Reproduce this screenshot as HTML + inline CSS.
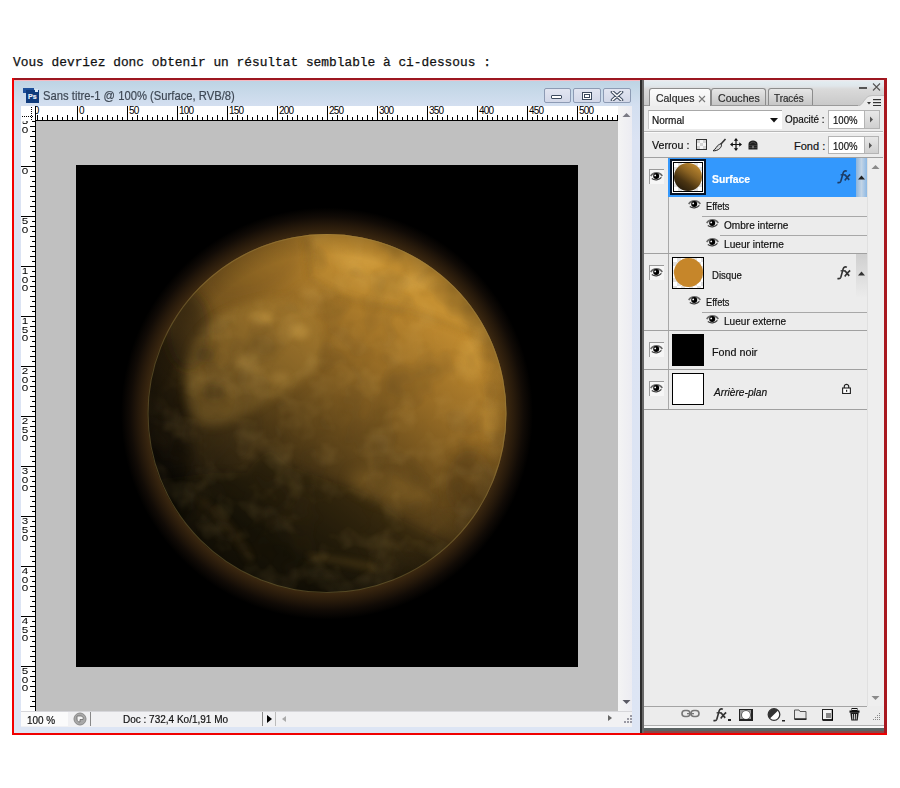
<!DOCTYPE html>
<html><head><meta charset="utf-8">
<style>
html,body{margin:0;padding:0;background:#fff;}
body{width:900px;height:788px;overflow:hidden;position:relative;font-family:"Liberation Sans",sans-serif;}
.a{position:absolute;}
.t{position:absolute;white-space:nowrap;line-height:1;-webkit-text-stroke:0.2px currentColor;}
#intro{position:absolute;left:13px;top:56px;font-family:"Liberation Mono",monospace;font-size:12.85px;line-height:13px;color:#111;white-space:pre;-webkit-text-stroke:0.25px #111;}
.hl{position:absolute;top:106px;font-size:10px;line-height:10px;letter-spacing:-0.75px;color:#000;}
.vl{position:absolute;left:21px;width:8px;font-size:9px;line-height:10px;color:#000;text-align:center;transform:scale(1.3,1.05);transform-origin:4px 0;}
.vl span{display:block;height:6.85px;text-align:center;}
</style></head><body>
<div id="intro">Vous devriez donc obtenir un résultat semblable à ci-dessous :</div>

<!-- red frame -->
<div class="a" style="left:12px;top:78px;width:875px;height:2px;background:#9c1620"></div>
<div class="a" style="left:12px;top:78px;width:2px;height:657px;background:#f40000"></div>
<div class="a" style="left:884px;top:78px;width:3px;height:657px;background:#a8181f"></div>
<div class="a" style="left:12px;top:733px;width:875px;height:2px;background:#f00000"></div>

<!-- document window -->
<div class="a" style="left:14px;top:80px;width:626px;height:653px;background:linear-gradient(#bcd3e4 0px,#c8d9e9 12px,#d3dff0 25px,#dbe3f3 60px,#dde5f4 100%)"></div>
<div class="a" style="left:14px;top:80px;width:626px;height:1px;background:#f8b8c0"></div>
<!-- PS icon -->
<div class="a" style="left:23px;top:88px;width:16px;height:15px;">
 <div class="a" style="left:0;top:0;width:11px;height:5px;background:#1c4f9a"></div>
 <div class="a" style="left:3px;top:2px;width:13px;height:13px;background:#0f3b7c"></div>
 <div class="a" style="left:12px;top:1px;width:3px;height:3px;background:#d8e8f8"></div>
 <div class="t" style="left:5px;top:5px;font-size:7px;color:#e8eef8;font-weight:bold;">Ps</div>
</div>
<div class="t" style="left:43px;top:89px;font-size:13px;color:#3e4854;transform:scaleX(0.865);transform-origin:0 0">Sans titre-1 @ 100% (Surface, RVB/8)</div>
<!-- title buttons -->
<div class="a" style="left:544px;top:88px;width:25px;height:13px;border:1px solid #8d9bb4;border-radius:2px;background:linear-gradient(#e2e5f1,#d3d8e8)">
  <div class="a" style="left:6px;top:6px;width:9px;height:2px;border:1px solid #3d4a5e;background:#fff;border-radius:1px"></div>
</div>
<div class="a" style="left:573px;top:88px;width:26px;height:13px;border:1px solid #8d9bb4;border-radius:2px;background:linear-gradient(#e2e5f1,#d3d8e8)">
  <div class="a" style="left:8px;top:3px;width:8px;height:6px;border:1px solid #3d4a5e;background:#fff;"><div class="a" style="left:1px;top:1px;width:4px;height:2px;border:1px solid #3d4a5e"></div></div>
</div>
<div class="a" style="left:603px;top:88px;width:26px;height:13px;border:1px solid #8d9bb4;border-radius:2px;background:linear-gradient(#e2e5f1,#d3d8e8)">
  <svg class="a" style="left:6px;top:2px" width="14" height="10" viewBox="0 0 14 10"><path d="M2.5 1 L11.5 9 M11.5 1 L2.5 9" stroke="#3d4a5e" stroke-width="3.6" stroke-linecap="round"/><path d="M2.5 1 L11.5 9 M11.5 1 L2.5 9" stroke="#fff" stroke-width="1.6" stroke-linecap="round"/></svg>
</div>

<!-- rulers -->
<div class="a" style="left:21px;top:106px;width:597px;height:15px;background:#fff"></div>
<div class="a" style="left:21px;top:121px;width:15px;height:591px;background:#fff"></div>
<svg class="a" style="left:0;top:0" width="900" height="788">
<g fill="#000">
<rect x="36" y="120" width="582" height="1"/>
<rect x="35" y="106" width="1" height="605"/>
<rect x="37" y="115" width="1" height="5"/><rect x="42" y="117" width="1" height="3"/><rect x="47" y="115" width="1" height="5"/><rect x="52" y="117" width="1" height="3"/><rect x="57" y="115" width="1" height="5"/><rect x="62" y="117" width="1" height="3"/><rect x="67" y="115" width="1" height="5"/><rect x="72" y="117" width="1" height="3"/><rect x="77" y="106" width="1" height="14"/><rect x="82" y="117" width="1" height="3"/><rect x="87" y="115" width="1" height="5"/><rect x="92" y="117" width="1" height="3"/><rect x="97" y="115" width="1" height="5"/><rect x="102" y="117" width="1" height="3"/><rect x="107" y="115" width="1" height="5"/><rect x="112" y="117" width="1" height="3"/><rect x="117" y="115" width="1" height="5"/><rect x="122" y="117" width="1" height="3"/><rect x="127" y="106" width="1" height="14"/><rect x="132" y="117" width="1" height="3"/><rect x="137" y="115" width="1" height="5"/><rect x="142" y="117" width="1" height="3"/><rect x="147" y="115" width="1" height="5"/><rect x="152" y="117" width="1" height="3"/><rect x="157" y="115" width="1" height="5"/><rect x="162" y="117" width="1" height="3"/><rect x="167" y="115" width="1" height="5"/><rect x="172" y="117" width="1" height="3"/><rect x="177" y="106" width="1" height="14"/><rect x="182" y="117" width="1" height="3"/><rect x="187" y="115" width="1" height="5"/><rect x="192" y="117" width="1" height="3"/><rect x="197" y="115" width="1" height="5"/><rect x="202" y="117" width="1" height="3"/><rect x="207" y="115" width="1" height="5"/><rect x="212" y="117" width="1" height="3"/><rect x="217" y="115" width="1" height="5"/><rect x="222" y="117" width="1" height="3"/><rect x="227" y="106" width="1" height="14"/><rect x="232" y="117" width="1" height="3"/><rect x="237" y="115" width="1" height="5"/><rect x="242" y="117" width="1" height="3"/><rect x="247" y="115" width="1" height="5"/><rect x="252" y="117" width="1" height="3"/><rect x="257" y="115" width="1" height="5"/><rect x="262" y="117" width="1" height="3"/><rect x="267" y="115" width="1" height="5"/><rect x="272" y="117" width="1" height="3"/><rect x="277" y="106" width="1" height="14"/><rect x="282" y="117" width="1" height="3"/><rect x="287" y="115" width="1" height="5"/><rect x="292" y="117" width="1" height="3"/><rect x="297" y="115" width="1" height="5"/><rect x="302" y="117" width="1" height="3"/><rect x="307" y="115" width="1" height="5"/><rect x="312" y="117" width="1" height="3"/><rect x="317" y="115" width="1" height="5"/><rect x="322" y="117" width="1" height="3"/><rect x="327" y="106" width="1" height="14"/><rect x="332" y="117" width="1" height="3"/><rect x="337" y="115" width="1" height="5"/><rect x="342" y="117" width="1" height="3"/><rect x="347" y="115" width="1" height="5"/><rect x="352" y="117" width="1" height="3"/><rect x="357" y="115" width="1" height="5"/><rect x="362" y="117" width="1" height="3"/><rect x="367" y="115" width="1" height="5"/><rect x="372" y="117" width="1" height="3"/><rect x="377" y="106" width="1" height="14"/><rect x="382" y="117" width="1" height="3"/><rect x="387" y="115" width="1" height="5"/><rect x="392" y="117" width="1" height="3"/><rect x="397" y="115" width="1" height="5"/><rect x="402" y="117" width="1" height="3"/><rect x="407" y="115" width="1" height="5"/><rect x="412" y="117" width="1" height="3"/><rect x="417" y="115" width="1" height="5"/><rect x="422" y="117" width="1" height="3"/><rect x="427" y="106" width="1" height="14"/><rect x="432" y="117" width="1" height="3"/><rect x="437" y="115" width="1" height="5"/><rect x="442" y="117" width="1" height="3"/><rect x="447" y="115" width="1" height="5"/><rect x="452" y="117" width="1" height="3"/><rect x="457" y="115" width="1" height="5"/><rect x="462" y="117" width="1" height="3"/><rect x="467" y="115" width="1" height="5"/><rect x="472" y="117" width="1" height="3"/><rect x="477" y="106" width="1" height="14"/><rect x="482" y="117" width="1" height="3"/><rect x="487" y="115" width="1" height="5"/><rect x="492" y="117" width="1" height="3"/><rect x="497" y="115" width="1" height="5"/><rect x="502" y="117" width="1" height="3"/><rect x="507" y="115" width="1" height="5"/><rect x="512" y="117" width="1" height="3"/><rect x="517" y="115" width="1" height="5"/><rect x="522" y="117" width="1" height="3"/><rect x="527" y="106" width="1" height="14"/><rect x="532" y="117" width="1" height="3"/><rect x="537" y="115" width="1" height="5"/><rect x="542" y="117" width="1" height="3"/><rect x="547" y="115" width="1" height="5"/><rect x="552" y="117" width="1" height="3"/><rect x="557" y="115" width="1" height="5"/><rect x="562" y="117" width="1" height="3"/><rect x="567" y="115" width="1" height="5"/><rect x="572" y="117" width="1" height="3"/><rect x="577" y="106" width="1" height="14"/><rect x="582" y="117" width="1" height="3"/><rect x="587" y="115" width="1" height="5"/><rect x="592" y="117" width="1" height="3"/><rect x="597" y="115" width="1" height="5"/><rect x="602" y="117" width="1" height="3"/><rect x="607" y="115" width="1" height="5"/><rect x="612" y="117" width="1" height="3"/><rect x="617" y="115" width="1" height="5"/>
<rect x="32" y="121" width="3" height="1"/><rect x="30" y="126" width="5" height="1"/><rect x="32" y="131" width="3" height="1"/><rect x="30" y="136" width="5" height="1"/><rect x="32" y="141" width="3" height="1"/><rect x="30" y="146" width="5" height="1"/><rect x="32" y="151" width="3" height="1"/><rect x="30" y="156" width="5" height="1"/><rect x="32" y="161" width="3" height="1"/><rect x="21" y="166" width="14" height="1"/><rect x="32" y="171" width="3" height="1"/><rect x="30" y="176" width="5" height="1"/><rect x="32" y="181" width="3" height="1"/><rect x="30" y="186" width="5" height="1"/><rect x="32" y="191" width="3" height="1"/><rect x="30" y="196" width="5" height="1"/><rect x="32" y="201" width="3" height="1"/><rect x="30" y="206" width="5" height="1"/><rect x="32" y="211" width="3" height="1"/><rect x="21" y="216" width="14" height="1"/><rect x="32" y="221" width="3" height="1"/><rect x="30" y="226" width="5" height="1"/><rect x="32" y="231" width="3" height="1"/><rect x="30" y="236" width="5" height="1"/><rect x="32" y="241" width="3" height="1"/><rect x="30" y="246" width="5" height="1"/><rect x="32" y="251" width="3" height="1"/><rect x="30" y="256" width="5" height="1"/><rect x="32" y="261" width="3" height="1"/><rect x="21" y="266" width="14" height="1"/><rect x="32" y="271" width="3" height="1"/><rect x="30" y="276" width="5" height="1"/><rect x="32" y="281" width="3" height="1"/><rect x="30" y="286" width="5" height="1"/><rect x="32" y="291" width="3" height="1"/><rect x="30" y="296" width="5" height="1"/><rect x="32" y="301" width="3" height="1"/><rect x="30" y="306" width="5" height="1"/><rect x="32" y="311" width="3" height="1"/><rect x="21" y="316" width="14" height="1"/><rect x="32" y="321" width="3" height="1"/><rect x="30" y="326" width="5" height="1"/><rect x="32" y="331" width="3" height="1"/><rect x="30" y="336" width="5" height="1"/><rect x="32" y="341" width="3" height="1"/><rect x="30" y="346" width="5" height="1"/><rect x="32" y="351" width="3" height="1"/><rect x="30" y="356" width="5" height="1"/><rect x="32" y="361" width="3" height="1"/><rect x="21" y="366" width="14" height="1"/><rect x="32" y="371" width="3" height="1"/><rect x="30" y="376" width="5" height="1"/><rect x="32" y="381" width="3" height="1"/><rect x="30" y="386" width="5" height="1"/><rect x="32" y="391" width="3" height="1"/><rect x="30" y="396" width="5" height="1"/><rect x="32" y="401" width="3" height="1"/><rect x="30" y="406" width="5" height="1"/><rect x="32" y="411" width="3" height="1"/><rect x="21" y="416" width="14" height="1"/><rect x="32" y="421" width="3" height="1"/><rect x="30" y="426" width="5" height="1"/><rect x="32" y="431" width="3" height="1"/><rect x="30" y="436" width="5" height="1"/><rect x="32" y="441" width="3" height="1"/><rect x="30" y="446" width="5" height="1"/><rect x="32" y="451" width="3" height="1"/><rect x="30" y="456" width="5" height="1"/><rect x="32" y="461" width="3" height="1"/><rect x="21" y="466" width="14" height="1"/><rect x="32" y="471" width="3" height="1"/><rect x="30" y="476" width="5" height="1"/><rect x="32" y="481" width="3" height="1"/><rect x="30" y="486" width="5" height="1"/><rect x="32" y="491" width="3" height="1"/><rect x="30" y="496" width="5" height="1"/><rect x="32" y="501" width="3" height="1"/><rect x="30" y="506" width="5" height="1"/><rect x="32" y="511" width="3" height="1"/><rect x="21" y="516" width="14" height="1"/><rect x="32" y="521" width="3" height="1"/><rect x="30" y="526" width="5" height="1"/><rect x="32" y="531" width="3" height="1"/><rect x="30" y="536" width="5" height="1"/><rect x="32" y="541" width="3" height="1"/><rect x="30" y="546" width="5" height="1"/><rect x="32" y="551" width="3" height="1"/><rect x="30" y="556" width="5" height="1"/><rect x="32" y="561" width="3" height="1"/><rect x="21" y="566" width="14" height="1"/><rect x="32" y="571" width="3" height="1"/><rect x="30" y="576" width="5" height="1"/><rect x="32" y="581" width="3" height="1"/><rect x="30" y="586" width="5" height="1"/><rect x="32" y="591" width="3" height="1"/><rect x="30" y="596" width="5" height="1"/><rect x="32" y="601" width="3" height="1"/><rect x="30" y="606" width="5" height="1"/><rect x="32" y="611" width="3" height="1"/><rect x="21" y="616" width="14" height="1"/><rect x="32" y="621" width="3" height="1"/><rect x="30" y="626" width="5" height="1"/><rect x="32" y="631" width="3" height="1"/><rect x="30" y="636" width="5" height="1"/><rect x="32" y="641" width="3" height="1"/><rect x="30" y="646" width="5" height="1"/><rect x="32" y="651" width="3" height="1"/><rect x="30" y="656" width="5" height="1"/><rect x="32" y="661" width="3" height="1"/><rect x="21" y="666" width="14" height="1"/><rect x="32" y="671" width="3" height="1"/><rect x="30" y="676" width="5" height="1"/><rect x="32" y="681" width="3" height="1"/><rect x="30" y="686" width="5" height="1"/><rect x="32" y="691" width="3" height="1"/><rect x="30" y="696" width="5" height="1"/><rect x="32" y="701" width="3" height="1"/><rect x="30" y="706" width="5" height="1"/>
</g>
<g fill="#000"><rect x="22" y="116" width="1" height="1"/><rect x="24" y="116" width="1" height="1"/><rect x="26" y="116" width="1" height="1"/><rect x="28" y="116" width="1" height="1"/><rect x="30" y="116" width="1" height="1"/><rect x="32" y="116" width="1" height="1"/><rect x="31" y="107" width="1" height="1"/><rect x="31" y="109" width="1" height="1"/><rect x="31" y="111" width="1" height="1"/><rect x="31" y="113" width="1" height="1"/><rect x="31" y="115" width="1" height="1"/><rect x="31" y="117" width="1" height="1"/><rect x="31" y="119" width="1" height="1"/></g>
</svg>
<div class="a" style="left:36px;top:106px;width:582px;height:14px;overflow:hidden">
 <div class="a" style="left:-36px;top:-106px;width:900px;height:200px"><div class="hl" style="left:29px">50</div><div class="hl" style="left:79px">0</div><div class="hl" style="left:129px">50</div><div class="hl" style="left:179px">100</div><div class="hl" style="left:229px">150</div><div class="hl" style="left:279px">200</div><div class="hl" style="left:329px">250</div><div class="hl" style="left:379px">300</div><div class="hl" style="left:429px">350</div><div class="hl" style="left:479px">400</div><div class="hl" style="left:529px">450</div><div class="hl" style="left:579px">500</div><div class="hl" style="left:629px">550</div></div>
</div>
<div class="a" style="left:21px;top:121px;width:14px;height:590px;overflow:hidden">
 <div class="a" style="left:-21px;top:-121px;width:100px;height:900px"><div class="vl" style="top:116.3px">5</div><div class="vl" style="top:124.5px">0</div><div class="vl" style="top:166.3px">0</div><div class="vl" style="top:216.3px">5</div><div class="vl" style="top:224.5px">0</div><div class="vl" style="top:266.3px">1</div><div class="vl" style="top:274.5px">0</div><div class="vl" style="top:282.7px">0</div><div class="vl" style="top:316.3px">1</div><div class="vl" style="top:324.5px">5</div><div class="vl" style="top:332.7px">0</div><div class="vl" style="top:366.3px">2</div><div class="vl" style="top:374.5px">0</div><div class="vl" style="top:382.7px">0</div><div class="vl" style="top:416.3px">2</div><div class="vl" style="top:424.5px">5</div><div class="vl" style="top:432.7px">0</div><div class="vl" style="top:466.3px">3</div><div class="vl" style="top:474.5px">0</div><div class="vl" style="top:482.7px">0</div><div class="vl" style="top:516.3px">3</div><div class="vl" style="top:524.5px">5</div><div class="vl" style="top:532.7px">0</div><div class="vl" style="top:566.3px">4</div><div class="vl" style="top:574.5px">0</div><div class="vl" style="top:582.7px">0</div><div class="vl" style="top:616.3px">4</div><div class="vl" style="top:624.5px">5</div><div class="vl" style="top:632.7px">0</div><div class="vl" style="top:666.3px">5</div><div class="vl" style="top:674.5px">0</div><div class="vl" style="top:682.7px">0</div><div class="vl" style="top:716.3px">5</div><div class="vl" style="top:724.5px">5</div><div class="vl" style="top:732.7px">0</div></div>
</div>

<!-- canvas -->
<div class="a" style="left:36px;top:121px;width:582px;height:590px;background:#c0c0c0"></div>
<div class="a" style="left:76px;top:165px;width:502px;height:502px;background:#000"></div>
<svg id="planet" class="a" style="left:76px;top:165px" width="502" height="502" viewBox="76 165 502 502">
<defs>
 <radialGradient id="glow" cx="327" cy="413.5" r="206" gradientUnits="userSpaceOnUse">
  <stop offset="0.87" stop-color="#3c2810" stop-opacity="1"/>
  <stop offset="0.915" stop-color="#26190b" stop-opacity="1"/>
  <stop offset="0.955" stop-color="#110b06" stop-opacity="1"/>
  <stop offset="1" stop-color="#000" stop-opacity="1"/>
 </radialGradient>
 <linearGradient id="base" x1="245.8" y1="527.2" x2="411" y2="296" gradientUnits="userSpaceOnUse">
  <stop offset="0" stop-color="#1a150a"/>
  <stop offset="0.25" stop-color="#3e2e12"/>
  <stop offset="0.5" stop-color="#6c4e1c"/>
  <stop offset="0.75" stop-color="#9a6e26"/>
  <stop offset="1" stop-color="#c28c30"/>
 </linearGradient>
 <radialGradient id="shade" cx="327" cy="413.5" r="180" gradientUnits="userSpaceOnUse">
  <stop offset="0.88" stop-color="#000" stop-opacity="0"/>
  <stop offset="1" stop-color="#000" stop-opacity="0.2"/>
 </radialGradient>
 <clipPath id="disc"><circle cx="327" cy="413.5" r="179.5"/></clipPath>
 <filter id="b20" x="-50%" y="-50%" width="200%" height="200%"><feGaussianBlur stdDeviation="16"/></filter>
 <filter id="b8" x="-50%" y="-50%" width="200%" height="200%"><feGaussianBlur stdDeviation="7"/></filter>
 <filter id="b5" x="-50%" y="-50%" width="200%" height="200%"><feGaussianBlur stdDeviation="5"/></filter>
 <filter id="b3" x="-50%" y="-50%" width="200%" height="200%"><feGaussianBlur stdDeviation="3.5"/></filter>
 <filter id="texD" x="0" y="0" width="100%" height="100%">
  <feTurbulence type="fractalNoise" baseFrequency="0.022" numOctaves="3" seed="3" result="n"/>
  <feColorMatrix in="n" type="matrix" values="0 0 0 0 0.05  0 0 0 0 0.03  0 0 0 0 0.01  2.2 0 0 0 -1.0" result="c"/>
  <feComposite in="c" in2="SourceGraphic" operator="in"/>
 </filter>
 <filter id="texB" x="0" y="0" width="100%" height="100%">
  <feTurbulence type="fractalNoise" baseFrequency="0.03" numOctaves="3" seed="11" result="n"/>
  <feColorMatrix in="n" type="matrix" values="0 0 0 0 0.80  0 0 0 0 0.55  0 0 0 0 0.17  2.4 0 0 0 -1.15" result="c"/>
  <feComposite in="c" in2="SourceGraphic" operator="in"/>
 </filter>
 <mask id="nohaze" maskUnits="userSpaceOnUse" x="76" y="165" width="502" height="502">
  <rect x="76" y="165" width="502" height="502" fill="#fff"/>
  <path d="M306 226 L311 279 Q292 296 284 298 C240 300 205 320 192 345 Q170 380 150 420 L130 226 Z" fill="#000" filter="url(#b5)"/>
 </mask>
</defs>
<rect x="76" y="165" width="502" height="502" fill="#000"/>
<circle cx="327" cy="413.5" r="206" fill="url(#glow)"/>
<g clip-path="url(#disc)">
 <rect x="140" y="225" width="380" height="380" fill="url(#base)"/>
 <ellipse cx="160" cy="440" rx="30" ry="110" fill="#000" opacity="0.45" filter="url(#b8)"/>
 <ellipse cx="255" cy="268" rx="55" ry="28" transform="rotate(-25 255 268)" fill="#5a4018" opacity="0.2" filter="url(#b8)"/>
 <ellipse cx="188" cy="330" rx="22" ry="40" fill="#1a1208" opacity="0.45" filter="url(#b8)"/>
 <path d="M306 230 L311 279 Q338 300 381 306 Q433 315 472 335 Q500 355 515 380 L515 230 Z" fill="#cc9a3a" opacity="0.28" filter="url(#b3)"/>
 <path d="M306 236 L311 279 Q338 300 381 306 Q433 315 472 335" fill="none" stroke="#5a3e14" stroke-width="3" opacity="0.3" filter="url(#b3)"/>
 <path d="M192 345 C205 320 240 300 284 298 C310 300 325 320 323 350 C318 372 300 385 270 400 C250 412 225 432 200 425 C185 415 180 380 192 345 Z" fill="#b8903e" opacity="0.3" filter="url(#b5)"/>
 <ellipse cx="205" cy="355" rx="10" ry="8" fill="#1e1408" opacity="0.3" filter="url(#b5)"/>
 <ellipse cx="214" cy="392" rx="12" ry="9" fill="#1e1408" opacity="0.28" filter="url(#b5)"/>
 <ellipse cx="262" cy="318" rx="12" ry="6" fill="#d0a44c" opacity="0.45" filter="url(#b3)"/>
 <ellipse cx="300" cy="332" rx="9" ry="7" fill="#d0a44c" opacity="0.45" filter="url(#b3)"/>
 <ellipse cx="245" cy="362" rx="11" ry="7" fill="#c09848" opacity="0.35" filter="url(#b3)"/>
 <ellipse cx="280" cy="378" rx="10" ry="6" fill="#c09848" opacity="0.3" filter="url(#b3)"/>
 <ellipse cx="360" cy="262" rx="22" ry="9" fill="#dcaa4c" opacity="0.35" filter="url(#b3)"/>
 <ellipse cx="420" cy="282" rx="18" ry="8" fill="#dcaa4c" opacity="0.3" filter="url(#b3)"/>
 <ellipse cx="470" cy="360" rx="12" ry="22" fill="#d8a848" opacity="0.3" filter="url(#b3)"/>
 <ellipse cx="490" cy="420" rx="8" ry="20" fill="#d8a848" opacity="0.3" filter="url(#b3)"/>
 <path d="M150 480 L212 473 L246 473 Q262 452 271 450 Q280 458 288 465 L322 478 L351 488 L376 499 L402 520 L436 537 Q470 552 500 580 L500 640 L150 640 Z" fill="#0c0804" opacity="0.3" filter="url(#b5)"/>
 <ellipse cx="390" cy="488" rx="42" ry="15" transform="rotate(15 390 488)" fill="#a47c30" opacity="0.32" filter="url(#b8)"/>
 <ellipse cx="470" cy="485" rx="25" ry="35" fill="#2a1c08" opacity="0.3" filter="url(#b8)"/>
 <path d="M309 556 Q340 560 376 568" fill="none" stroke="#8a6a2c" stroke-width="5" opacity="0.35" filter="url(#b3)"/>
 <path d="M200 500 Q230 520 250 560" fill="none" stroke="#6a5024" stroke-width="5" opacity="0.3" filter="url(#b3)"/>
 <g mask="url(#nohaze)"><rect x="140" y="225" width="380" height="380" fill="#fff" filter="url(#texD)" opacity="0.26"/>
 <rect x="140" y="225" width="380" height="380" fill="#fff" filter="url(#texB)" opacity="0.15"/></g>
 <circle cx="327" cy="413.5" r="180" fill="url(#shade)"/>
</g>
<circle cx="327" cy="413.5" r="179" fill="none" stroke="#a08a48" stroke-width="1.1" opacity="0.4"/>
</svg>

<!-- v scrollbar -->
<div class="a" style="left:618px;top:106px;width:14px;height:605px;background:linear-gradient(90deg,#f4f4f4,#ececf2)"></div>
<svg class="a" style="left:622px;top:112px" width="9" height="6"><path d="M0.5 5 L4.5 1 L8.5 5Z" fill="#7a7a84"/></svg>
<svg class="a" style="left:622px;top:699px" width="9" height="6"><path d="M0.5 1 L4.5 5 L8.5 1Z" fill="#5a5a64"/></svg>

<!-- status bar -->
<div class="a" style="left:21px;top:711px;width:611px;height:15px;background:#f1f1f3;border-top:1px solid #d6d6da"></div>
<div class="a" style="left:21px;top:712px;width:47px;height:14px;background:#fbfbfb"></div>
<div class="t" style="left:26.5px;top:715px;font-size:11px;color:#111;transform:scaleX(0.904);transform-origin:0 0">100 %</div>
<svg class="a" style="left:73px;top:712px" width="14" height="14"><circle cx="7" cy="7" r="6" fill="#a8a8a8" stroke="#8a8a8a"/><path d="M4 4 L8 4 C10 4 10.5 6 10 7.5 L7 7.5 L7 10 C5 10 4 9 4 7Z" fill="#f4f4f4" stroke="#6a6a6a" stroke-width="0.8"/></svg>
<div class="a" style="left:90px;top:712px;width:1px;height:14px;background:#888"></div>
<div class="t" style="left:123px;top:714px;font-size:11px;color:#111;transform:scaleX(0.909);transform-origin:0 0">Doc : 732,4 Ko/1,91 Mo</div>
<div class="a" style="left:262px;top:712px;width:1px;height:14px;background:#888"></div>
<svg class="a" style="left:266px;top:714px" width="8" height="10"><path d="M1 1 L6 5 L1 9Z" fill="#000"/></svg>
<div class="a" style="left:275px;top:712px;width:1px;height:14px;background:#bbb"></div>
<svg class="a" style="left:281px;top:715px" width="6" height="8"><path d="M5 1 L1 4 L5 7Z" fill="#aaa"/></svg>
<svg class="a" style="left:607px;top:714px" width="6" height="8"><path d="M1 1 L5 4 L1 7Z" fill="#666"/></svg>


<svg class="a" style="left:624px;top:715px" width="9" height="10" fill="#9a9aa4"><rect x="6" y="0" width="2" height="2"/><rect x="3" y="3" width="2" height="2"/><rect x="6" y="3" width="2" height="2"/><rect x="0" y="6" width="2" height="2"/><rect x="3" y="6" width="2" height="2"/><rect x="6" y="6" width="2" height="2"/></svg>
<!-- layers panel -->
<div class="a" style="left:640px;top:80px;width:2px;height:653px;background:#2c2c2c"></div>
<div class="a" style="left:642px;top:80px;width:2px;height:653px;background:#686868"></div>
<div class="a" style="left:644px;top:80px;width:240px;height:653px;background:#ececec"></div>
<div class="a" style="left:644px;top:80px;width:240px;height:26px;background:linear-gradient(#f0e8ec 0px,#e2ecf0 2px,#e0e6ea 6px,#dadada 9px,#c9c9c9 25px)"></div>
<div class="a" style="left:644px;top:105px;width:240px;height:1px;background:#9a9a9a"></div>
<!-- tabs -->
<div class="a" style="left:711px;top:88px;width:55px;height:17px;box-sizing:border-box;border:1px solid #8c8c8c;border-bottom:none;border-radius:3px 3px 0 0;background:linear-gradient(#e6e6e6,#c6c6c6)"></div>
<div class="a" style="left:768px;top:88px;width:45px;height:17px;box-sizing:border-box;border:1px solid #8c8c8c;border-bottom:none;border-radius:3px 3px 0 0;background:linear-gradient(#e6e6e6,#c6c6c6)"></div>
<div class="a" style="left:649px;top:88px;width:62px;height:18px;box-sizing:border-box;border:1px solid #8c8c8c;border-bottom:none;border-radius:3px 3px 0 0;background:linear-gradient(#fbfbfb,#eeeeee)"></div>
<div class="t" style="left:656px;top:93px;font-size:11px;color:#2a2a2a;transform:scaleX(0.951);transform-origin:0 0">Calques</div>
<svg class="a" style="left:698px;top:95px" width="8" height="8"><path d="M1 1 L7 7 M7 1 L1 7" stroke="#777" stroke-width="1.1"/></svg>
<div class="t" style="left:718px;top:93px;font-size:11px;color:#2a2a2a;transform:scaleX(0.960);transform-origin:0 0">Couches</div>
<div class="t" style="left:774px;top:93px;font-size:11px;color:#2a2a2a;transform:scaleX(0.892);transform-origin:0 0">Tracés</div>
<!-- flyout corner -->
<svg class="a" style="left:858px;top:94px" width="26" height="12"><path d="M0 12 C6 12 6 2 14 2 L26 2 L26 12Z" fill="#ececec"/><path d="M0 11.5 C6 11.5 6 1.5 14 1.5 L26 1.5" fill="none" stroke="#c0c0c0"/><path d="M9 8 L13 8 L11 10.5Z" fill="#333"/><rect x="15" y="5" width="8" height="1.2" fill="#333"/><rect x="15" y="8" width="8" height="1.2" fill="#333"/><rect x="15" y="11" width="8" height="1" fill="#333"/></svg>
<div class="a" style="left:859px;top:87px;width:8px;height:2px;background:#555"></div>
<svg class="a" style="left:872px;top:83px" width="9" height="8"><path d="M1 0.5 L8 7.5 M8 0.5 L1 7.5" stroke="#555" stroke-width="1.1"/></svg>

<!-- blend row -->
<div class="a" style="left:648px;top:110px;width:134px;height:19px;box-sizing:border-box;background:#fff;border-top:1px solid #a8a8a8;border-left:1px solid #c8c8c8"></div>
<div class="t" style="left:652px;top:115px;font-size:11px;color:#111;transform:scaleX(0.909);transform-origin:0 0">Normal</div>
<svg class="a" style="left:770px;top:118px" width="8" height="5"><path d="M0 0 L8 0 L4 4.5Z" fill="#111"/></svg>
<div class="t" style="left:785px;top:114px;font-size:11px;color:#111;transform:scaleX(0.898);transform-origin:0 0">Opacité :</div>
<div class="a" style="left:828px;top:110px;width:37px;height:19px;box-sizing:border-box;background:#fff;border:1px solid #b4b4b4"></div>
<div class="t" style="left:833px;top:115px;font-size:11px;color:#111;transform:scaleX(0.872);transform-origin:0 0">100%</div>
<div class="a" style="left:865px;top:110px;width:15px;height:19px;box-sizing:border-box;background:linear-gradient(#e8e8e8,#d0d0d0);border:1px solid #b4b4b4;border-left:none"></div>
<svg class="a" style="left:869px;top:116px" width="5" height="7"><path d="M1 0.5 L4 3.5 L1 6.5Z" fill="#555"/></svg>
<div class="a" style="left:644px;top:131px;width:239px;height:1px;background:#b8b8b8"></div>
<div class="a" style="left:644px;top:132px;width:239px;height:1px;background:#fafafa"></div>

<!-- lock row -->
<div class="t" style="left:652px;top:140px;font-size:11px;color:#111;transform:scaleX(0.971);transform-origin:0 0">Verrou :</div>
<div class="a" style="left:696px;top:139px;width:11px;height:11px;box-sizing:border-box;border:1px solid #333;background:#f4f4f4"><div class="a" style="left:0;top:0;width:3px;height:3px;background:#d4d4d4"></div><div class="a" style="left:6px;top:0;width:3px;height:3px;background:#d4d4d4"></div><div class="a" style="left:3px;top:3px;width:3px;height:3px;background:#d4d4d4"></div><div class="a" style="left:0;top:6px;width:3px;height:3px;background:#d4d4d4"></div><div class="a" style="left:6px;top:6px;width:3px;height:3px;background:#d4d4d4"></div></div>
<svg class="a" style="left:712px;top:138px" width="15" height="14"><path d="M13.5 1 L8.5 6.5" stroke="#333" stroke-width="1.6"/><path d="M8.8 6 C7 6.2 5.5 7.5 4.2 9.5 C3.3 11 2.2 12 1 12.8 C3.5 13 6 12.2 7.8 10.5 C9.2 9 9.8 7.5 9.5 6.5 Z" fill="#d8d8d8" stroke="#222" stroke-width="1"/></svg>
<svg class="a" style="left:730px;top:138px" width="12" height="13"><path d="M6 1.5 L6 11.5 M1.5 6.5 L10.5 6.5" stroke="#111" stroke-width="1.2"/><path d="M6 0 L3.8 2.8 L8.2 2.8Z M6 13 L3.8 10.2 L8.2 10.2Z M0 6.5 L2.8 4.3 L2.8 8.7Z M12 6.5 L9.2 4.3 L9.2 8.7Z" fill="#111"/></svg>
<svg class="a" style="left:748px;top:139px" width="10" height="11"><path d="M0.5 10.5 L0.5 5 C0.5 0.2 9.5 0.2 9.5 5 L9.5 10.5 Z" fill="#222"/><path d="M2.6 5 C2.6 2.6 7.4 2.6 7.4 5" fill="none" stroke="#555" stroke-width="0.8"/><rect x="1" y="6" width="8" height="0.8" fill="#444"/><rect x="1" y="8" width="8" height="0.8" fill="#444"/><rect x="4.3" y="6.8" width="1.4" height="2.4" fill="#888"/></svg>
<div class="t" style="left:794px;top:141px;font-size:11px;color:#111;transform:scaleX(1.000);transform-origin:0 0">Fond :</div>
<div class="a" style="left:828px;top:136px;width:37px;height:18px;box-sizing:border-box;background:#fff;border:1px solid #b4b4b4"></div>
<div class="t" style="left:833px;top:141px;font-size:11px;color:#111;transform:scaleX(0.872);transform-origin:0 0">100%</div>
<div class="a" style="left:865px;top:136px;width:14px;height:18px;box-sizing:border-box;background:linear-gradient(#e8e8e8,#d0d0d0);border:1px solid #b4b4b4;border-left:none"></div>
<svg class="a" style="left:868px;top:142px" width="5" height="7"><path d="M1 0.5 L4 3.5 L1 6.5Z" fill="#555"/></svg>
<div class="a" style="left:644px;top:157px;width:239px;height:1px;background:#a0a0a0"></div>

<!-- layers list -->
<div class="a" style="left:867px;top:158px;width:16px;height:548px;background:#eeeeee;border-left:1px solid #e0e0e0"></div>
<svg class="a" style="left:871px;top:164px" width="9" height="6"><path d="M0.5 5 L4.5 1 L8.5 5Z" fill="#8a8a8a"/></svg>
<svg class="a" style="left:871px;top:695px" width="9" height="6"><path d="M0.5 1 L4.5 5 L8.5 1Z" fill="#8a8a8a"/></svg>
<div class="a" style="left:668px;top:158px;width:1px;height:251px;background:#a8a8a8"></div>

<!-- Surface row -->
<div class="a" style="left:668px;top:158px;width:199px;height:39px;background:#3398fd"></div>
<div class="a" style="left:856px;top:158px;width:11px;height:39px;background:linear-gradient(90deg,#8cb4dc,#c2d4e6 50%,#8cb8e4)"></div>
<svg class="a" style="left:858px;top:175px" width="7" height="5"><path d="M0 4.5 L3.5 0.5 L7 4.5Z" fill="#222"/></svg>
<div class="a" style="left:670px;top:159px;width:36px;height:36px;box-sizing:border-box;border:2px solid #061428;background:#fff">
 <div class="a" style="left:1px;top:1px;width:30px;height:30px;box-sizing:border-box;border:1px solid #000;background:repeating-conic-gradient(#e2e2e2 0 25%,#fff 0 50%) 0 0/8px 8px">
  <div class="a" style="left:0px;top:0px;width:28px;height:28px;border-radius:50%;background:linear-gradient(35deg,#1e160a 5%,#4a3412 35%,#8a6222 60%,#c08a30 90%)"></div>
 </div>
</div>
<div class="t" style="left:712px;top:174px;font-size:11px;font-weight:bold;color:#fff;transform:scaleX(0.943);transform-origin:0 0">Surface</div>
<svg class="a" style="left:836px;top:170px" width="16" height="14" viewBox="0 0 16 14"><path d="M10.8 1.3 C9.5 0.4 7.8 0.8 7.2 2.8 L4.8 11.2 C4.3 12.6 3.2 13 1.4 12.4" fill="none" stroke="#1d3c66" stroke-width="1.6"/><path d="M4.6 4.8 L9.2 4.8" stroke="#1d3c66" stroke-width="1.3"/><path d="M8.6 4.6 C10 5.5 11.5 8 13.2 9.8 M14.2 4.6 C12.5 5.5 11 7.5 8.8 10.4" fill="none" stroke="#1d3c66" stroke-width="1.7"/></svg>
<div class="a" style="left:649px;top:169px;width:15px;height:15px;box-sizing:border-box;border-left:1px solid #9a9a9a;border-top:1px solid #9a9a9a;background:#f6f6f6"></div>
<svg class="a" style="left:650px;top:171px" width="13" height="10" viewBox="0 0 13 10"><path d="M0.8 5.2 C3 0.8 10 0.8 12.2 5.2" fill="none" stroke="#6a6a6a" stroke-width="1.7"/><path d="M1.8 7.6 C4.5 9.6 9 9.4 11.4 6.4" fill="none" stroke="#3a3a3a" stroke-width="1.2"/><circle cx="6.2" cy="4.9" r="3" fill="#000"/><circle cx="5.2" cy="4.4" r="0.9" fill="#fff"/></svg>
<!-- effets surface -->
<svg class="a" style="left:688px;top:199px" width="13" height="10" viewBox="0 0 13 10"><path d="M0.8 5.2 C3 0.8 10 0.8 12.2 5.2" fill="none" stroke="#6a6a6a" stroke-width="1.7"/><path d="M1.8 7.6 C4.5 9.6 9 9.4 11.4 6.4" fill="none" stroke="#3a3a3a" stroke-width="1.2"/><circle cx="6.2" cy="4.9" r="3" fill="#000"/><circle cx="5.2" cy="4.4" r="0.9" fill="#fff"/></svg>
<div class="t" style="left:706px;top:201px;font-size:11px;color:#111;transform:scaleX(0.841);transform-origin:0 0">Effets</div>
<div class="a" style="left:702px;top:216px;width:165px;height:1px;background:#a8a8a8"></div>
<svg class="a" style="left:706px;top:218px" width="13" height="10" viewBox="0 0 13 10"><path d="M0.8 5.2 C3 0.8 10 0.8 12.2 5.2" fill="none" stroke="#6a6a6a" stroke-width="1.7"/><path d="M1.8 7.6 C4.5 9.6 9 9.4 11.4 6.4" fill="none" stroke="#3a3a3a" stroke-width="1.2"/><circle cx="6.2" cy="4.9" r="3" fill="#000"/><circle cx="5.2" cy="4.4" r="0.9" fill="#fff"/></svg>
<div class="t" style="left:724px;top:220px;font-size:11px;color:#111;transform:scaleX(0.915);transform-origin:0 0">Ombre interne</div>
<div class="a" style="left:720px;top:235px;width:147px;height:1px;background:#a8a8a8"></div>
<svg class="a" style="left:706px;top:237px" width="13" height="10" viewBox="0 0 13 10"><path d="M0.8 5.2 C3 0.8 10 0.8 12.2 5.2" fill="none" stroke="#6a6a6a" stroke-width="1.7"/><path d="M1.8 7.6 C4.5 9.6 9 9.4 11.4 6.4" fill="none" stroke="#3a3a3a" stroke-width="1.2"/><circle cx="6.2" cy="4.9" r="3" fill="#000"/><circle cx="5.2" cy="4.4" r="0.9" fill="#fff"/></svg>
<div class="t" style="left:723.5px;top:239px;font-size:11px;color:#111;transform:scaleX(0.924);transform-origin:0 0">Lueur interne</div>
<div class="a" style="left:644px;top:253px;width:223px;height:1px;background:#a0a0a0"></div>

<!-- Disque row -->
<div class="a" style="left:856px;top:254px;width:11px;height:44px;background:linear-gradient(#cfcfcf,#ececec)"></div>
<svg class="a" style="left:858px;top:271px" width="7" height="5"><path d="M0 4.5 L3.5 0.5 L7 4.5Z" fill="#333"/></svg>
<div class="a" style="left:672px;top:257px;width:32px;height:32px;box-sizing:border-box;border:1px solid #000;background:repeating-conic-gradient(#e2e2e2 0 25%,#fff 0 50%) 0 0/8px 8px">
  <div class="a" style="left:1px;top:0px;width:29px;height:29px;border-radius:50%;background:#c6862a"></div>
</div>
<div class="t" style="left:712px;top:270px;font-size:11px;color:#111;transform:scaleX(0.870);transform-origin:0 0">Disque</div>
<svg class="a" style="left:836px;top:266px" width="16" height="14" viewBox="0 0 16 14"><path d="M10.8 1.3 C9.5 0.4 7.8 0.8 7.2 2.8 L4.8 11.2 C4.3 12.6 3.2 13 1.4 12.4" fill="none" stroke="#333" stroke-width="1.6"/><path d="M4.6 4.8 L9.2 4.8" stroke="#333" stroke-width="1.3"/><path d="M8.6 4.6 C10 5.5 11.5 8 13.2 9.8 M14.2 4.6 C12.5 5.5 11 7.5 8.8 10.4" fill="none" stroke="#333" stroke-width="1.7"/></svg>
<div class="a" style="left:649px;top:265px;width:15px;height:15px;box-sizing:border-box;border-left:1px solid #9a9a9a;border-top:1px solid #9a9a9a;background:#f6f6f6"></div>
<svg class="a" style="left:650px;top:267px" width="13" height="10" viewBox="0 0 13 10"><path d="M0.8 5.2 C3 0.8 10 0.8 12.2 5.2" fill="none" stroke="#6a6a6a" stroke-width="1.7"/><path d="M1.8 7.6 C4.5 9.6 9 9.4 11.4 6.4" fill="none" stroke="#3a3a3a" stroke-width="1.2"/><circle cx="6.2" cy="4.9" r="3" fill="#000"/><circle cx="5.2" cy="4.4" r="0.9" fill="#fff"/></svg>
<svg class="a" style="left:688px;top:295px" width="13" height="10" viewBox="0 0 13 10"><path d="M0.8 5.2 C3 0.8 10 0.8 12.2 5.2" fill="none" stroke="#6a6a6a" stroke-width="1.7"/><path d="M1.8 7.6 C4.5 9.6 9 9.4 11.4 6.4" fill="none" stroke="#3a3a3a" stroke-width="1.2"/><circle cx="6.2" cy="4.9" r="3" fill="#000"/><circle cx="5.2" cy="4.4" r="0.9" fill="#fff"/></svg>
<div class="t" style="left:706px;top:297px;font-size:11px;color:#111;transform:scaleX(0.841);transform-origin:0 0">Effets</div>
<div class="a" style="left:702px;top:312px;width:165px;height:1px;background:#a8a8a8"></div>
<svg class="a" style="left:706px;top:314px" width="13" height="10" viewBox="0 0 13 10"><path d="M0.8 5.2 C3 0.8 10 0.8 12.2 5.2" fill="none" stroke="#6a6a6a" stroke-width="1.7"/><path d="M1.8 7.6 C4.5 9.6 9 9.4 11.4 6.4" fill="none" stroke="#3a3a3a" stroke-width="1.2"/><circle cx="6.2" cy="4.9" r="3" fill="#000"/><circle cx="5.2" cy="4.4" r="0.9" fill="#fff"/></svg>
<div class="t" style="left:723.5px;top:316px;font-size:11px;color:#111;transform:scaleX(0.916);transform-origin:0 0">Lueur externe</div>
<div class="a" style="left:644px;top:330px;width:223px;height:1px;background:#a0a0a0"></div>

<!-- Fond noir -->
<div class="a" style="left:672px;top:334px;width:32px;height:32px;background:#000"></div>
<div class="t" style="left:712px;top:347px;font-size:11px;color:#111;transform:scaleX(0.977);transform-origin:0 0">Fond noir</div>
<div class="a" style="left:649px;top:342px;width:15px;height:15px;box-sizing:border-box;border-left:1px solid #9a9a9a;border-top:1px solid #9a9a9a;background:#f6f6f6"></div>
<svg class="a" style="left:650px;top:344px" width="13" height="10" viewBox="0 0 13 10"><path d="M0.8 5.2 C3 0.8 10 0.8 12.2 5.2" fill="none" stroke="#6a6a6a" stroke-width="1.7"/><path d="M1.8 7.6 C4.5 9.6 9 9.4 11.4 6.4" fill="none" stroke="#3a3a3a" stroke-width="1.2"/><circle cx="6.2" cy="4.9" r="3" fill="#000"/><circle cx="5.2" cy="4.4" r="0.9" fill="#fff"/></svg>
<div class="a" style="left:644px;top:369px;width:223px;height:1px;background:#a0a0a0"></div>

<!-- Arriere-plan -->
<div class="a" style="left:672px;top:373px;width:32px;height:32px;box-sizing:border-box;border:1px solid #000;background:#fff"></div>
<div class="t" style="left:713.5px;top:387px;font-size:11px;font-style:italic;color:#111;transform:scaleX(0.925);transform-origin:0 0">Arrière-plan</div>
<div class="a" style="left:649px;top:381px;width:15px;height:15px;box-sizing:border-box;border-left:1px solid #9a9a9a;border-top:1px solid #9a9a9a;background:#f6f6f6"></div>
<svg class="a" style="left:650px;top:383px" width="13" height="10" viewBox="0 0 13 10"><path d="M0.8 5.2 C3 0.8 10 0.8 12.2 5.2" fill="none" stroke="#6a6a6a" stroke-width="1.7"/><path d="M1.8 7.6 C4.5 9.6 9 9.4 11.4 6.4" fill="none" stroke="#3a3a3a" stroke-width="1.2"/><circle cx="6.2" cy="4.9" r="3" fill="#000"/><circle cx="5.2" cy="4.4" r="0.9" fill="#fff"/></svg>
<svg class="a" style="left:842px;top:383px" width="9" height="11"><path d="M2.3 5 L2.3 3.3 C2.3 0.8 6.7 0.8 6.7 3.3 L6.7 5" fill="none" stroke="#222" stroke-width="1.2"/><rect x="0.6" y="5" width="7.8" height="5.5" fill="#fff" stroke="#222" stroke-width="1.1"/><rect x="4" y="6.8" width="1.2" height="2" fill="#222"/></svg>
<div class="a" style="left:644px;top:409px;width:223px;height:1px;background:#a0a0a0"></div>

<!-- bottom bar -->
<div class="a" style="left:644px;top:706px;width:223px;height:1px;background:#a4a4a4"></div>
<svg class="a" style="left:681px;top:709px" width="20" height="9"><rect x="1" y="1.5" width="8" height="6" rx="3" fill="none" stroke="#777" stroke-width="1.6"/><rect x="10" y="1.5" width="8" height="6" rx="3" fill="none" stroke="#777" stroke-width="1.6"/><rect x="6" y="4" width="7" height="1.3" fill="#777"/></svg>
<svg class="a" style="left:712px;top:708px" width="16" height="14" viewBox="0 0 16 14"><path d="M10.8 1.3 C9.5 0.4 7.8 0.8 7.2 2.8 L4.8 11.2 C4.3 12.6 3.2 13 1.4 12.4" fill="none" stroke="#333" stroke-width="1.6"/><path d="M4.6 4.8 L9.2 4.8" stroke="#333" stroke-width="1.3"/><path d="M8.6 4.6 C10 5.5 11.5 8 13.2 9.8 M14.2 4.6 C12.5 5.5 11 7.5 8.8 10.4" fill="none" stroke="#333" stroke-width="1.7"/></svg>
<div class="a" style="left:728px;top:719px;width:3px;height:2px;background:#222"></div>
<div class="a" style="left:739px;top:709px;width:14px;height:12px;box-sizing:border-box;border:1px solid #222;border-right-width:2px;border-bottom-width:2px;background:#9a9a9a"><div class="a" style="left:2px;top:1px;width:8px;height:8px;border-radius:50%;background:#fff;box-shadow:0 0 0 0.6px #333"></div></div>
<svg class="a" style="left:767px;top:708px" width="20" height="14"><circle cx="7" cy="6.5" r="5.8" fill="#fff" stroke="#333" stroke-width="1.3"/><path d="M11.1 2.4 A5.8 5.8 0 0 0 2.9 10.6Z" fill="#333"/><rect x="15" y="12" width="3" height="1.5" fill="#222"/></svg>
<svg class="a" style="left:794px;top:709px" width="13" height="11"><path d="M0.5 1 L5 1 L6 2.5 L12 2.5 L12 10 L0.5 10Z" fill="#e8e8e8" stroke="#555" stroke-width="1"/><path d="M0.5 10.2 L12.5 10.2" stroke="#222" stroke-width="1.5"/></svg>
<svg class="a" style="left:822px;top:709px" width="11" height="12"><rect x="0.5" y="0.5" width="10" height="10.5" fill="#f4f4f4" stroke="#222"/><rect x="4" y="4" width="5" height="5" fill="#888"/><path d="M1 11 L10.5 11 L10.5 1" stroke="#000" stroke-width="1.5" fill="none"/></svg>
<svg class="a" style="left:849px;top:708px" width="11" height="13"><rect x="3" y="0.5" width="5" height="2" fill="none" stroke="#111"/><rect x="0.5" y="2.5" width="10" height="2.2" fill="#111"/><path d="M1.3 4.5 L2.3 12.5 L8.7 12.5 L9.7 4.5Z" fill="#1a1a1a"/><path d="M3.5 6 L3.8 11.5 M5.5 6 L5.5 11.5 M7.5 6 L7.2 11.5" stroke="#e0e0e0" stroke-width="0.9"/></svg>
<svg class="a" style="left:872px;top:713px" width="9" height="9" fill="#888"><rect x="7" y="0" width="1" height="1"/><rect x="5" y="2" width="1" height="1"/><rect x="7" y="2" width="1" height="1"/><rect x="3" y="4" width="1" height="1"/><rect x="5" y="4" width="1" height="1"/><rect x="7" y="4" width="1" height="1"/><rect x="1" y="6" width="1" height="1"/><rect x="3" y="6" width="1" height="1"/><rect x="5" y="6" width="1" height="1"/><rect x="7" y="6" width="1" height="1"/></svg>
<div class="a" style="left:644px;top:725px;width:240px;height:1px;background:#b0b0b0"></div>
<div class="a" style="left:644px;top:726px;width:240px;height:2px;background:#f8f8f8"></div>
<div class="a" style="left:644px;top:728px;width:240px;height:3px;background:#5b6363"></div>
<div class="a" style="left:644px;top:731px;width:240px;height:2px;background:#8a4848"></div>
</body></html>
